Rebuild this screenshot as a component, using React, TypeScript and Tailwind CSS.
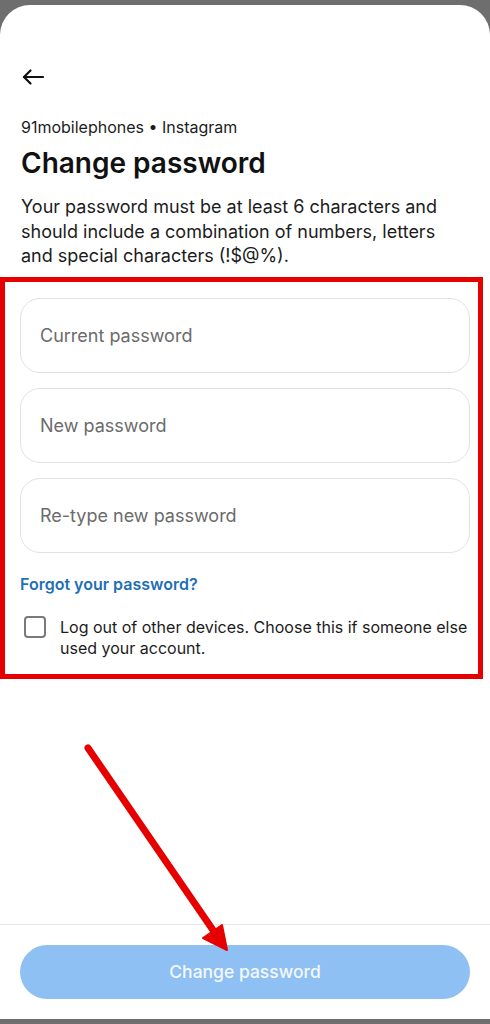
import type { JSX } from "react";

const font = { fontFamily: "Inter, 'Noto Sans', sans-serif" };

const PasswordField = ({ label }: { label: string }): JSX.Element => (
  <div className="h-[75px] rounded-[20px] border border-[#e2e2e2] flex items-center pl-[19px] text-[18px] text-[#6b6b6b]">
    {label}
  </div>
);

export default function App() {
  return (
    <div className="relative w-[490px] h-[1024px] bg-[#6e6e6e] flex flex-col" style={font}>
      <div className="h-[5px] shrink-0" />

      {/* Sheet */}
      <div className="flex-1 bg-white rounded-t-[30px] flex flex-col">
        <div className="pt-[63px] pl-[22px]">
          <svg width="22" height="18" viewBox="0 0 22 18" fill="none" stroke="#111" strokeWidth="2.2" strokeLinecap="round" strokeLinejoin="round">
            <path d="M21 9H2" />
            <path d="M8.5 2.5 2 9l6.5 6.5" />
          </svg>
        </div>

        <div className="px-[21px] mt-[31px]">
          <p className="text-[16px] leading-[20px] text-[#1c1c1c]">91mobilephones • Instagram</p>
          <h1 className="mt-[8px] text-[28px] leading-[36px] font-semibold text-[#111]">Change password</h1>
          <p className="mt-[14px] text-[18px] leading-[24.5px] text-[#1c1c1c]">
            Your password must be at least 6 characters and should include a combination of numbers, letters and special characters (!$@%).
          </p>
        </div>

        {/* Highlighted form */}
        <div className="mt-[8px] w-[483px] border-[5px] border-[#e60000] pt-[16px] pl-[15px] pr-[8px] pb-[15px]">
          <div className="flex flex-col gap-[15px]">
            <PasswordField label="Current password" />
            <PasswordField label="New password" />
            <PasswordField label="Re-type new password" />
          </div>

          <p className="mt-[21px] text-[16px] leading-[20px] font-semibold text-[#1f6fb4]">Forgot your password?</p>

          <div className="mt-[23px] flex items-start">
            <div className="ml-[4px] mt-[-1px] w-[22px] h-[22px] shrink-0 rounded-[4px] border-2 border-[#7a7a7a]" />
            <p className="ml-[14px] text-[16px] leading-[21px] text-[#1c1c1c]">
              Log out of other devices. Choose this if someone else used your account.
            </p>
          </div>
        </div>

        <div className="flex-1" />

        <div className="border-t border-[#e6e6e6] pt-[20px] pb-[20px] px-[20px]">
          <button className="w-full h-[54px] rounded-full bg-[#8fc0f4] text-[#f4f8fd] text-[17.5px] font-medium">
            Change password
          </button>
        </div>
      </div>

      <div className="h-[5px] shrink-0" />

      {/* Annotation arrow */}
      <svg className="absolute left-0 top-0 pointer-events-none" width="490" height="1024" viewBox="0 0 490 1024">
        <line x1="88" y1="748" x2="215" y2="933" stroke="#e60000" strokeWidth="7" strokeLinecap="round" />
        <path d="M227 950 L203 938 L222 925 Z" fill="#e60000" stroke="#e60000" strokeWidth="2" strokeLinejoin="round" />
      </svg>
    </div>
  );
}
